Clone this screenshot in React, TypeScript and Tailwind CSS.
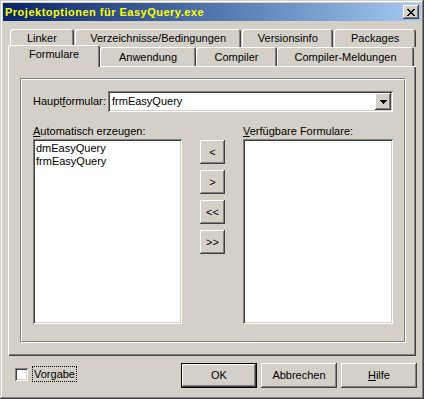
const raised =
  "shadow-[inset_-1px_-1px_#404040,inset_1px_1px_#ffffff,inset_-2px_-2px_#808080,inset_2px_2px_#d4d0c8]";
const sunken =
  "shadow-[inset_1px_1px_#808080,inset_-1px_-1px_#ffffff,inset_2px_2px_#404040,inset_-2px_-2px_#d4d0c8]";

const ROW1 = [
  { label: "Linker", w: 64 },
  { label: "Verzeichnisse/Bedingungen", w: 167 },
  { label: "Versionsinfo", w: 91 },
  { label: "Packages", w: 82 },
];

const ROW2 = [
  { label: "Anwendung", w: 96 },
  { label: "Compiler", w: 81 },
  { label: "Compiler-Meldungen", w: 137 },
];

function Tab({ label, w }: { label: string; w: number }) {
  return (
    <div
      style={{ width: w }}
      className="h-full flex items-center justify-center rounded-t-[3px] shadow-[inset_1px_1px_#ffffff,inset_-1px_0_#404040,inset_-2px_0_#808080] pt-[1px]"
    >
      {label}
    </div>
  );
}

function NavButton({ label }: { label: string }) {
  return (
    <div className={`w-[25px] h-[24px] flex items-center justify-center ${raised}`}>
      {label}
    </div>
  );
}

function DlgButton({ children, def }: { children: React.ReactNode; def?: boolean }) {
  return (
    <div className={`w-[76px] h-[25px] ${def ? "border border-black" : ""}`}>
      <div className={`w-full h-full flex items-center justify-center ${raised}`}>{children}</div>
    </div>
  );
}

export default function App() {
  return (
    <div className="w-[424px] h-[399px] bg-[#d4d0c8] p-[3px] flex flex-col text-[11px] text-black font-['Liberation_Sans',Arial,sans-serif] shadow-[inset_-1px_-1px_#404040,inset_1px_1px_#d4d0c8,inset_-2px_-2px_#808080,inset_2px_2px_#ffffff] leading-none select-none">
      {/* title bar */}
      <div className="h-[18px] flex items-center justify-between bg-gradient-to-r from-[#0a246a] to-[#a6caf0] pl-[2px] pr-[2px]">
        <span className="font-bold text-[#ffff00] tracking-[0.5px]">Projektoptionen für EasyQuery.exe</span>
        <div className={`w-[16px] h-[14px] bg-[#d4d0c8] flex items-center justify-center ${raised}`}>
          <svg width="8" height="7" viewBox="0 0 8 7" shapeRendering="crispEdges">
            <path
              d="M0 0h2v1h-2zM6 0h2v1h-2zM1 1h2v1h-2zM5 1h2v1h-2zM2 2h4v1h-4zM3 3h2v1h-2zM2 4h4v1h-4zM1 5h2v1h-2zM5 5h2v1h-2zM0 6h2v1h-2zM6 6h2v1h-2z"
              fill="#000"
            />
          </svg>
        </div>
      </div>

      {/* tabs */}
      <div className="mt-[8px] ml-[5px] w-[408px] flex flex-col">
        <div className="h-[18px] flex pl-[2px] gap-[1px]">
          {ROW1.map((t) => (
            <Tab key={t.label} {...t} />
          ))}
        </div>
        <div className="h-[19px] flex">
          <div className="relative z-10 -top-[2px] w-[92px] h-[22px] flex items-center justify-center bg-[#d4d0c8] rounded-t-[3px] shadow-[inset_1px_1px_#ffffff,inset_-1px_0_#404040,inset_-2px_0_#808080] pb-[3px]">
            Formulare
          </div>
          {ROW2.map((t) => (
            <Tab key={t.label} {...t} />
          ))}
        </div>

        {/* panel */}
        <div className="h-[290px] p-[12px] shadow-[inset_1px_1px_#ffffff,inset_-1px_-1px_#404040,inset_-2px_-2px_#808080]">
          <div className="w-[386px] h-[265px] border border-t-[#808080] border-l-[#808080] border-b-white border-r-white">
            <div className="w-full h-full border border-t-white border-l-white border-b-[#808080] border-r-[#808080] pl-[11px] pt-[11px] flex flex-col">
              <div className="flex items-center h-[21px]">
                <span className="w-[75px]">
                  Haupt<u>f</u>ormular:
                </span>
                <div className={`w-[285px] h-[21px] bg-white flex items-center justify-between p-[2px] ${sunken}`}>
                  <span className="pl-[2px]">frmEasyQuery</span>
                  <div className={`w-[16px] h-[17px] bg-[#d4d0c8] flex items-center justify-center ${raised}`}>
                    <svg width="7" height="4" viewBox="0 0 7 4" shapeRendering="crispEdges">
                      <path d="M0 0h7v1h-7zM1 1h5v1h-5zM2 2h3v1h-3zM3 3h1v1h-1z" fill="#000" />
                    </svg>
                  </div>
                </div>
              </div>

              <div className="flex mt-[14px]">
                <div className="flex flex-col w-[149px]">
                  <span className="h-[12px]">
                    <u>A</u>utomatisch erzeugen:
                  </span>
                  <div className={`mt-[1px] h-[185px] bg-white p-[4px] pl-[3px] flex flex-col gap-[1px] ${sunken}`}>
                    <span className="h-[12px]">dmEasyQuery</span>
                    <span className="h-[12px]">frmEasyQuery</span>
                  </div>
                </div>
                <div className="ml-[18px] mt-[14px] flex flex-col gap-[6px]">
                  <NavButton label="<" />
                  <NavButton label=">" />
                  <NavButton label="<<" />
                  <NavButton label=">>" />
                </div>
                <div className="ml-[18px] flex flex-col w-[150px]">
                  <span className="h-[12px]">
                    <u>V</u>erfügbare Formulare:
                  </span>
                  <div className={`mt-[1px] h-[185px] bg-white ${sunken}`} />
                </div>
              </div>
            </div>
          </div>
        </div>
      </div>

      {/* bottom */}
      <div className="flex items-start mt-[7px] ml-[12px]">
        <div className={`mt-[5px] w-[13px] h-[13px] bg-white ${sunken}`} />
        <span className="ml-[4px] mt-[3px] h-[16px] px-[1px] flex items-center border border-dotted border-black">
          Vorgabe
        </span>
        <div className="ml-[104px] flex gap-[4px]">
          <DlgButton def>OK</DlgButton>
          <DlgButton>Abbrechen</DlgButton>
          <DlgButton>
            <u>H</u>ilfe
          </DlgButton>
        </div>
      </div>
    </div>
  );
}
